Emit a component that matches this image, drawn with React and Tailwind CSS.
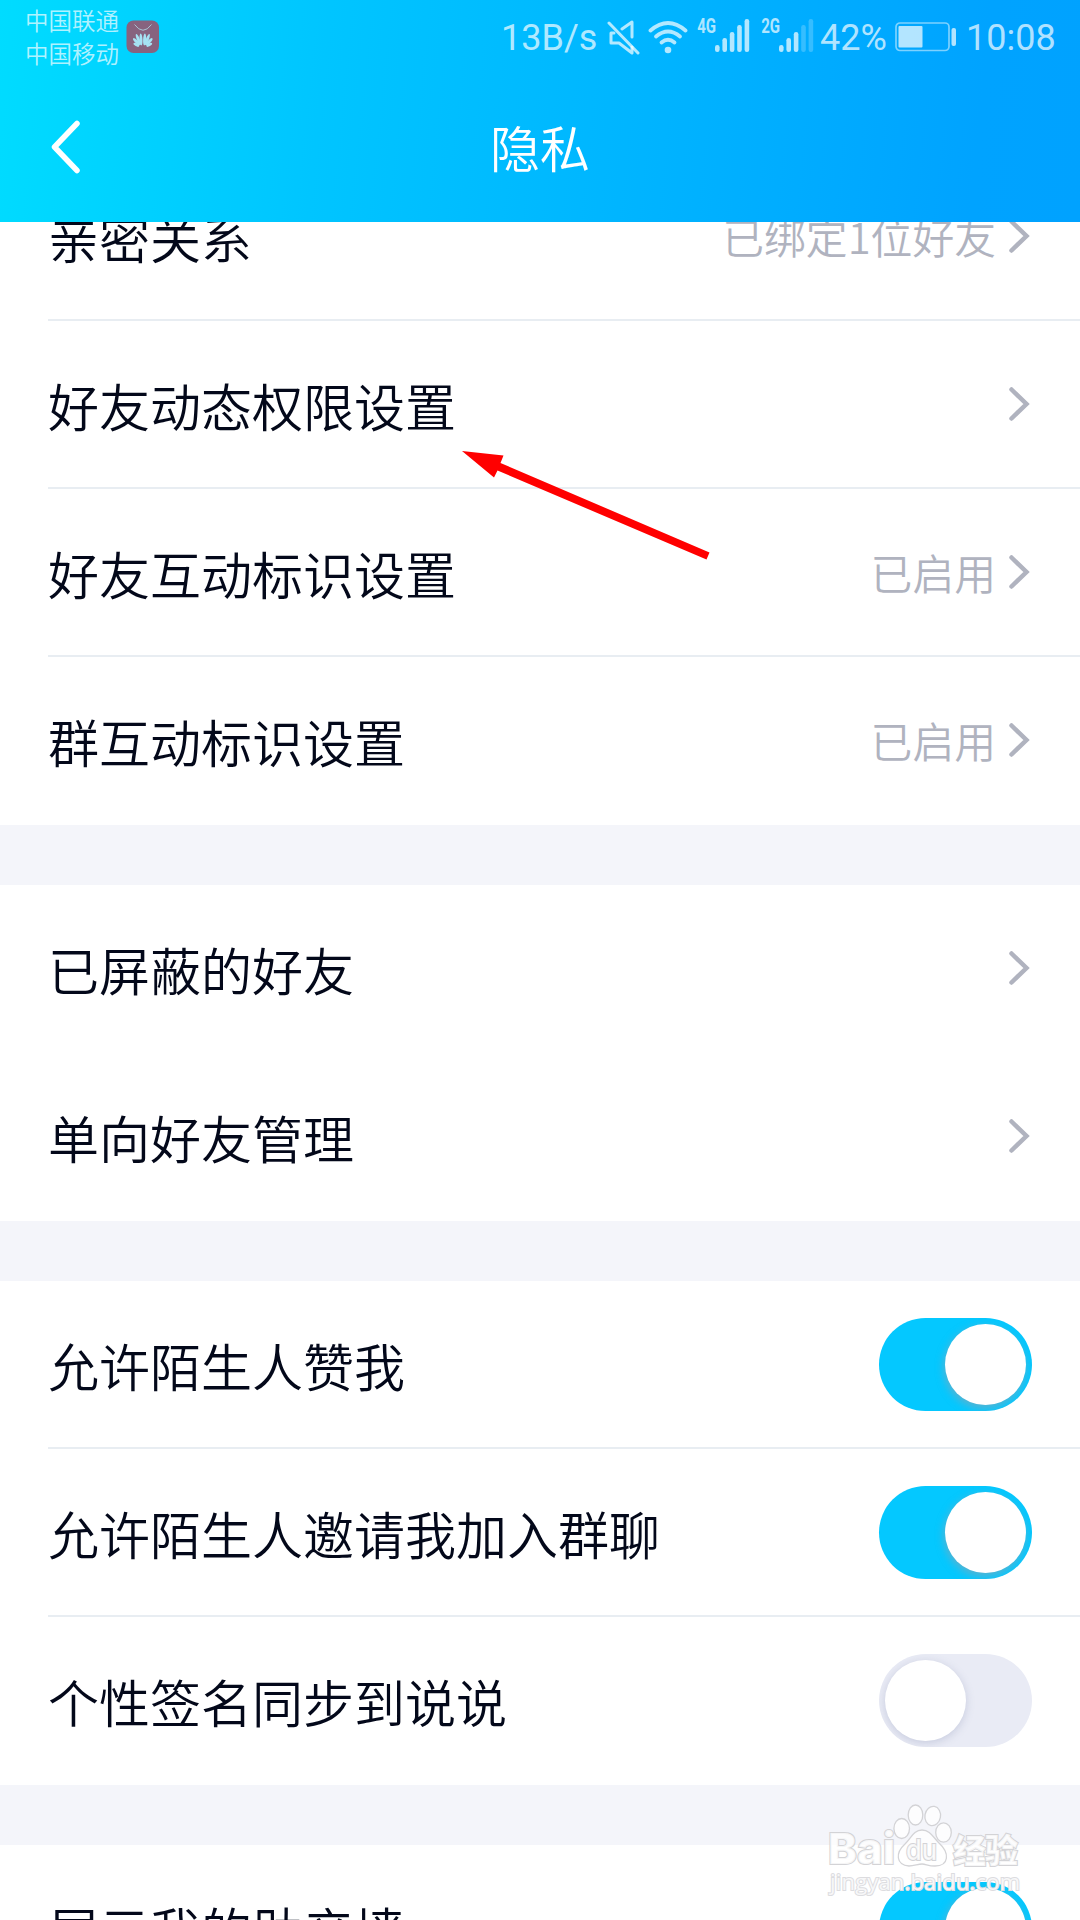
import React from 'react';

const groups = [
  [
    { label: '亲密关系', value: '已绑定1位好友' },
    { label: '好友动态权限设置' },
    { label: '好友互动标识设置', value: '已启用' },
    { label: '群互动标识设置', value: '已启用' },
  ],
  [
    { label: '已屏蔽的好友', noDivider: true },
    { label: '单向好友管理' },
  ],
  [
    { label: '允许陌生人赞我', toggle: true, on: true },
    { label: '允许陌生人邀请我加入群聊', toggle: true, on: true },
    { label: '个性签名同步到说说', toggle: true, on: false },
  ],
  [{ label: '展示我的助产墙', toggle: true, on: true }],
];

const Signal = ({ label, level }) => (
  <div className="flex items-start h-[33px]">
    <span className="w-[19px] h-[14px] flex items-center justify-center font-['Roboto'] font-bold text-[20px] leading-none">
      <span className="scale-x-75">{label}</span>
    </span>
    <svg className="-ml-px" width="35" height="33" viewBox="0 0 35 33" fill="currentColor">
      {[7, 14, 20, 27, 33].map((h, i) => (
        <rect key={h} x={i * 7.4} y={33 - h} width="4.6" height={h} rx="2.2" opacity={i < level ? 1 : 0.3} />
      ))}
    </svg>
  </div>
);

const MuteIcon = () => (
  <svg width="34" height="35" viewBox="0 0 34 35" fill="none" stroke="currentColor" strokeWidth="3" strokeLinecap="round">
    <path d="M2 3L31 33" />
    <path d="M7 13H4V23H12L25 33V27" strokeLinejoin="round" />
    <path d="M15 9L25 2V17" strokeLinejoin="round" />
  </svg>
);

const WifiIcon = () => (
  <svg width="40" height="33" viewBox="0 0 40 33" fill="none" stroke="currentColor" strokeWidth="3.8" strokeLinecap="round">
    <path d="M2.5 9.5Q20 -5.5 37.5 9.5" />
    <path d="M8 15.5Q20 5.5 32 15.5" />
    <path d="M13.5 21.5Q20 16 26.5 21.5" />
    <circle cx="20" cy="29" r="3.3" fill="currentColor" stroke="none" />
  </svg>
);

const Battery = () => (
  <svg width="62" height="30" viewBox="0 0 62 30" fill="currentColor">
    <rect x="1" y="1" width="53" height="27.5" rx="4" fill="none" stroke="currentColor" strokeWidth="1.7" opacity="0.7" />
    <rect x="3.5" y="4" width="24" height="21.5" rx="1" />
    <rect x="56.5" y="6" width="4.5" height="18" rx="2" />
  </svg>
);

// cx, cy, ry, angle of each petal in the left fan
const petals = [
  [15, 19.5, 6, -3],
  [12.3, 19.5, 5.8, -22],
  [10.5, 21.8, 4.8, -42],
  [10.3, 24.8, 3.2, -62],
];

const StoreBadge = () => (
  <svg width="34" height="34" viewBox="0 0 34 34">
    <rect x="0.5" y="0.5" width="32.5" height="32.5" rx="7" fill="#87637f" />
    <path d="M8.5 4.5Q17 16 25.5 4.5" fill="none" stroke="#a9c4d4" strokeWidth="1" />
    <g fill="#a5e2f3">
      {petals.map(([x, y, ry, a]) => (
        <g key={a}>
          <ellipse cx={x} cy={y} rx="1.5" ry={ry} transform={`rotate(${a} ${x} ${y})`} />
          <ellipse cx={33.6 - x} cy={y} rx="1.5" ry={ry} transform={`rotate(${-a} ${33.6 - x} ${y})`} />
        </g>
      ))}
    </g>
  </svg>
);

const StatusBar = () => (
  <div className="h-[74px] flex items-start text-white/70 font-['Roboto']">
    <div className="ml-[25px] pt-[4px] font-['Noto_Sans_CJK_SC',sans-serif] font-[350] text-[23.5px] leading-[32.5px]">
      <p>中国联通</p>
      <p>中国移动</p>
    </div>
    <div className="ml-[7px] mt-5"><StoreBadge /></div>
    <div className="ml-auto mr-[23px] mt-[17px] h-[40px] flex items-center text-[36px]">
      <span className="w-[98px] pt-[2px]">13B/s</span>
      <span className="ml-[8px]"><MuteIcon /></span>
      <span className="ml-[7px]"><WifiIcon /></span>
      <span className="ml-[9px] -mt-[3px]"><Signal label="4G" level={5} /></span>
      <span className="ml-[11px] -mt-[3px]"><Signal label="2G" level={3} /></span>
      <span className="ml-[6px] w-[70px] pt-[2px]">42%</span>
      <span className="ml-[5px]"><Battery /></span>
      <span className="ml-[9px] w-[91px] pt-[2px]">10:08</span>
    </div>
  </div>
);

const Header = () => (
  <header className="relative z-10 h-[222px] shrink-0 bg-[linear-gradient(96deg,#00dcff_0%,#00c5ff_30%,#00b1ff_65%,#00a3ff_90%,#00a2ff_100%)] text-white">
    <StatusBar />
    <div className="h-[148px] grid grid-cols-[1fr_auto_1fr] items-center">
      <svg className="ml-[51px] -mt-[3px]" width="30" height="54" viewBox="0 0 30 54" fill="none" stroke="currentColor" strokeWidth="5.5" strokeLinecap="round" strokeLinejoin="round">
        <path d="M26 3.5L3.5 27L26 50.5" />
      </svg>
      <h1 className="-mt-[4px] text-[50px] font-[350] leading-none">隐私</h1>
    </div>
  </header>
);

const Chevron = () => (
  <svg className="ml-[13px] mr-[50px]" width="21" height="34" viewBox="0 0 21 34" fill="none" stroke="#b0b3bf" strokeWidth="4.5" strokeLinecap="round">
    <path d="M2.5 2.5L17.5 17L2.5 31.5" strokeLinejoin="miter" />
  </svg>
);

const Toggle = ({ on }) => (
  <button
    role="switch"
    aria-checked={on}
    className={`w-[153px] h-[93px] mr-[48px] px-[6px] rounded-full flex items-center overflow-hidden ${on ? 'justify-end bg-[#04c8ff]' : 'justify-start bg-[#e9ebf5]'}`}
  >
    <span className={`size-[81px] rounded-full bg-white ${on ? 'shadow-[-1px_3px_8px_rgba(160,160,170,0.6)]' : 'shadow-[0_2px_8px_rgba(120,130,170,0.3)]'}`} />
  </button>
);

const Row = ({ item, last }) => (
  <div className="h-[168px] pl-12 bg-white">
    <div className={`h-full flex items-center border-b-2 ${last || item.noDivider ? 'border-white' : 'border-[#e8edf2]'}`}>
      <span className="flex-1 pt-[3px] text-[51px] font-[350] leading-none text-[#03081a]">{item.label}</span>
      {item.toggle ? (
        <Toggle on={item.on} />
      ) : (
        <>
          {item.value && <span className="pt-[2px] text-[41.8px] font-[350] leading-none text-[#b0b3bf]">{item.value}</span>}
          <Chevron />
        </>
      )}
    </div>
  </div>
);

const Pointer = () => (
  <svg className="absolute left-[460px] top-[448px] z-20" width="252" height="114" viewBox="0 0 252 114" fill="#ff0000">
    <path d="M2 3L43.5 7.5L40.5 15L249.5 104.5L246.5 111.5L37.5 22.5L34 29.5Z" />
  </svg>
);

const Watermark = () => (
  <svg className="absolute left-[822px] top-[1800px] z-20" width="204" height="100" viewBox="0 0 204 100" fill="#ffffff" fillOpacity="0.8" stroke="#d3d3d6" strokeWidth="1.3">
    <ellipse cx="79.7" cy="28.5" rx="7.8" ry="10" />
    <ellipse cx="93.5" cy="15" rx="7.3" ry="10" />
    <ellipse cx="110.7" cy="16" rx="7.8" ry="9.7" transform="rotate(10 110.7 16)" />
    <ellipse cx="121.5" cy="32.5" rx="7.8" ry="9.7" />
    <path d="M100 30C108 30 111 37 117 43C128 53 127 66 113 66C106 66 104 64 100 64C96 64 92 66 87 66C74 65 73 53 83 44C89 38 92 30 100 30Z" />
    <g fontFamily="Inter, sans-serif" fontWeight="800" paintOrder="stroke" strokeWidth="2">
      <text x="6" y="64" fontSize="43" textLength="67" lengthAdjust="spacingAndGlyphs">Bai</text>
      <text x="84" y="60" fontSize="28" fontWeight="500" textLength="31" lengthAdjust="spacingAndGlyphs">du</text>
    </g>
    <text x="131" y="63" fontFamily="'Noto Sans CJK SC', sans-serif" fontWeight="900" fontSize="33" textLength="65" paintOrder="stroke" strokeWidth="2">经验</text>
    <text x="8" y="90" fontFamily="'Open Sans', sans-serif" fontSize="22" textLength="190" paintOrder="stroke" stroke="#dcdcdf" strokeWidth="2">jingyan.baidu.com</text>
  </svg>
);

export default function App() {
  return (
    <div className="relative w-[1080px] h-[1920px] flex flex-col overflow-hidden bg-[#f4f5fa] font-['Noto_Sans_CJK_SC',sans-serif]">
      <Header />
      <main className="-mt-[69px] flex flex-col gap-[60px]">
        {groups.map((items, g) => (
          <section key={g}>
            {items.map((item, i) => (
              <Row key={item.label} item={item} last={i === items.length - 1} />
            ))}
          </section>
        ))}
      </main>
      <Pointer />
      <Watermark />
    </div>
  );
}
